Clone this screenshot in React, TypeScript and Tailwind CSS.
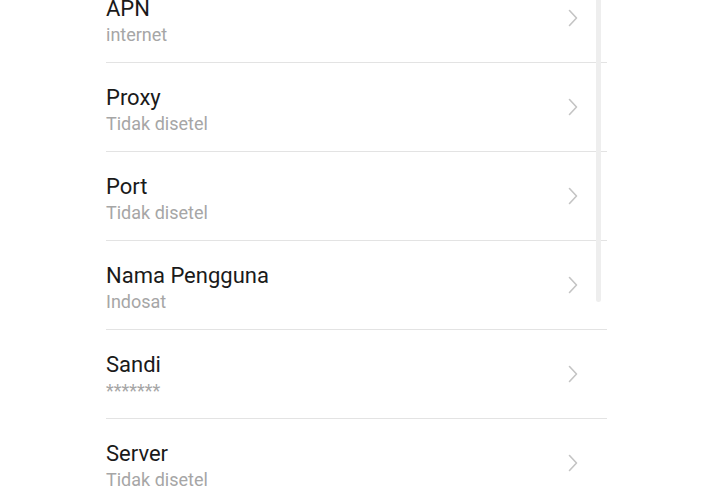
const rows = [
  { title: 'APN', value: 'internet' },
  { title: 'Proxy', value: 'Tidak disetel' },
  { title: 'Port', value: 'Tidak disetel' },
  { title: 'Nama Pengguna', value: 'Indosat' },
  { title: 'Sandi', value: '*******', masked: true },
  { title: 'Server', value: 'Tidak disetel' },
];

function Chevron() {
  return (
    <svg width="12" height="18" viewBox="0 0 12 18" fill="none" className="shrink-0">
      <path d="M2.5 1.5 L9.5 9 L2.5 16.5" stroke="#c4c4c4" strokeWidth="1.6" strokeLinecap="round" strokeLinejoin="round" />
    </svg>
  );
}

export default function App() {
  return (
    <div className="relative w-[712px] h-[500px] overflow-hidden bg-white font-['Roboto',sans-serif]">
      <div className="-mt-[26px] ml-[106px] w-[501px]">
        {rows.map((row) => (
          <div key={row.title} className="h-[89px] border-b border-[#e3e3e3] flex">
            <div className="flex-1 flex flex-col pt-[22px]">
              <span className="text-[22px] leading-[26px] text-[#1a1a1a]">{row.title}</span>
              {row.masked ? (
                <span className="mt-[2px] text-[18px] leading-[22px] text-[#a6a6a6]">{row.value}</span>
              ) : (
                <span className="mt-[2px] text-[18px] leading-[22px] text-[#a6a6a6]">{row.value}</span>
              )}
            </div>
            <div className="mr-[28px] self-center pb-[1px]">
              <Chevron />
            </div>
          </div>
        ))}
      </div>
      <div className="absolute left-[596px] top-0 w-[5px] h-[302px] rounded-b-full bg-[#eeeeee]" />
    </div>
  );
}
